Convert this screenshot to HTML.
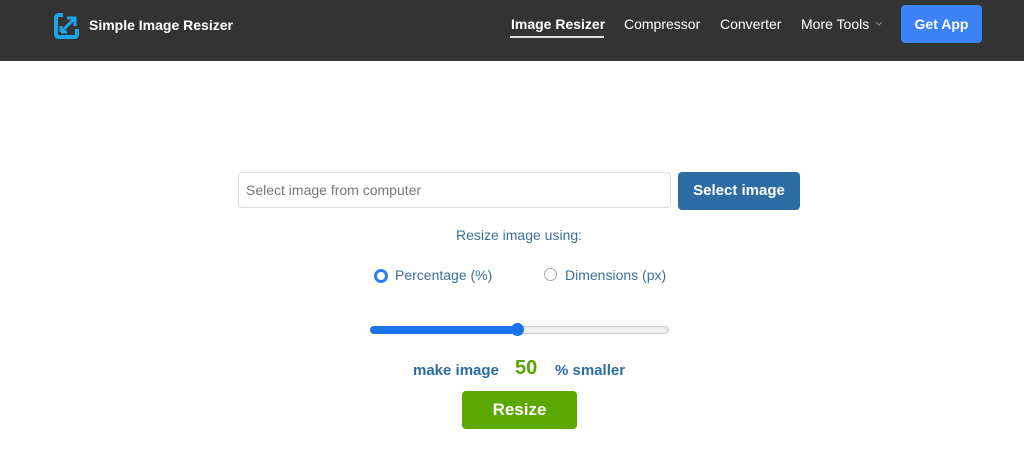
<!DOCTYPE html><html><head><style>
body{margin:0;width:1024px;height:469px;background:#fff;font-family:"Liberation Sans",sans-serif;position:relative;overflow:hidden}
.hd{position:absolute;left:0;top:0;width:1024px;height:61px;background:#333}
.a{position:absolute;white-space:nowrap}
</style></head><body>
<div class="hd">
<svg class="a" style="left:54px;top:11px" width="26" height="28" viewBox="0 0 26 28"><path d="M9 4H5Q2 4 2 7V23Q2 26 5 26H20Q23 26 23 23V18" fill="none" stroke="#1ba6e8" stroke-width="4"/><path d="M8 20L20 8M13 7H21V15" fill="none" stroke="#1ba6e8" stroke-width="3"/><path d="M7 21V15M7 21H13" stroke="#1ba6e8" stroke-width="3"/></svg>
<div class="a" style="left:89px;top:17px;color:#fff;font-weight:bold;font-size:14px">Simple Image Resizer</div>
<div class="a" style="left:511px;top:16px;color:#fff;font-weight:bold;font-size:14px">Image Resizer</div>
<div class="a" style="left:510px;top:36px;width:94px;height:2px;background:#ddd"></div>
<div class="a" style="left:624px;top:16px;color:#fff;font-size:14px">Compressor</div>
<div class="a" style="left:720px;top:16px;color:#fff;font-size:14px">Converter</div>
<div class="a" style="left:801px;top:16px;color:#fff;font-size:14px">More Tools</div>
<svg class="a" style="left:875px;top:21px" width="8" height="6"><path d="M1 1L4 4L7 1" fill="none" stroke="#888" stroke-width="1"/></svg>
<div class="a" style="left:901px;top:5px;width:81px;height:38px;background:#3b82f6;border-radius:4px;color:#fff;font-weight:bold;font-size:14px;line-height:38px;text-align:center">Get App</div>
</div>
<div class="a" style="left:238px;top:172px;height:34px;border:1px solid #ddd;border-radius:4px;color:#777;font-size:14px;line-height:34px;padding-left:7px;width:424px">Select image from computer</div>
<div class="a" style="left:678px;top:172px;width:122px;height:38px;background:#2d6da3;border-radius:4px;color:#fff;font-weight:bold;font-size:15px;line-height:38px;text-align:center">Select image</div>
<div class="a" style="left:0;width:1038px;top:227px;text-align:center;color:#3d6f9c;font-size:14px">Resize image using:</div>
<div class="a" style="left:374px;top:269px;width:8px;height:8px;border:3px solid #2f7ff2;border-radius:50%"></div>
<div class="a" style="left:395px;top:267px;color:#3d6f9c;font-size:14px">Percentage (%)</div>
<div class="a" style="left:544px;top:268px;width:11px;height:11px;border:1px solid #aaa;border-radius:50%"></div>
<div class="a" style="left:565px;top:267px;color:#3d6f9c;font-size:14px">Dimensions (px)</div>
<div class="a" style="left:370px;top:326px;width:297px;height:6px;background:#eee;border:1px solid #ccc;border-radius:4px"></div>
<div class="a" style="left:370px;top:326px;width:146px;height:8px;background:#1a73e8;border-radius:4px"></div>
<div class="a" style="left:511px;top:323px;width:13px;height:13px;background:#1a73e8;border-radius:50%"></div>
<div class="a" style="left:413px;top:362px;color:#2d6da3;font-weight:bold;font-size:15px">make image</div>
<div class="a" style="left:515px;top:357px;color:#5aa400;font-weight:bold;font-size:20px">50</div>
<div class="a" style="left:555px;top:362px;color:#2d6da3;font-weight:bold;font-size:15px">% smaller</div>
<div class="a" style="left:462px;top:391px;width:115px;height:38px;background:#5aa800;border-radius:4px;color:#fff;font-weight:bold;font-size:17px;line-height:38px;text-align:center">Resize</div>
</body></html>
